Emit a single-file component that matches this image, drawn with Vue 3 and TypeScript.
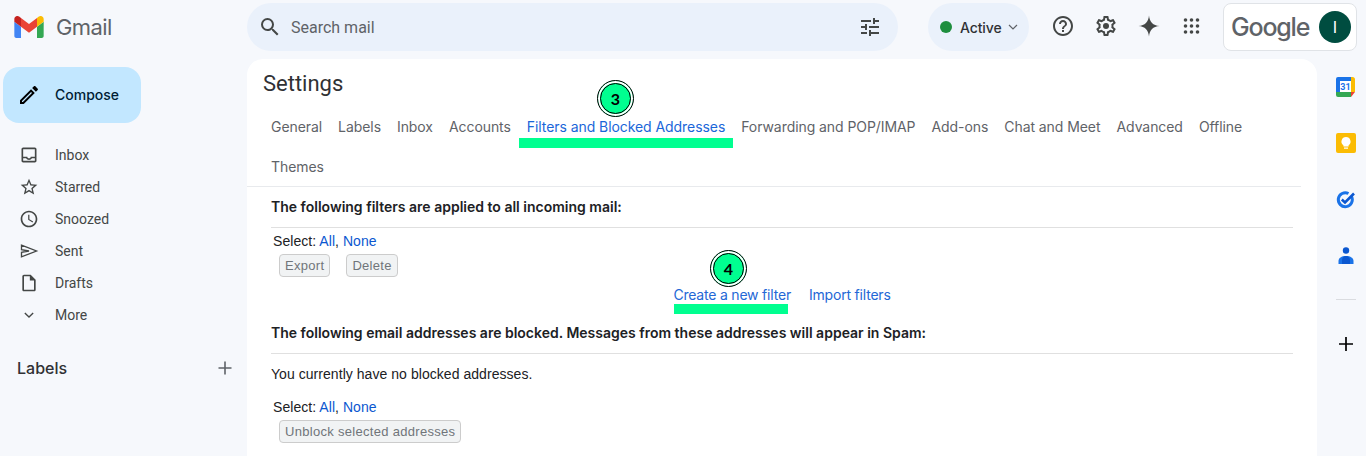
<script setup lang="ts">
interface NavItem {
  label: string;
  path: string;
  outline?: boolean;
}

const tabs: string[] = [
  'General',
  'Labels',
  'Inbox',
  'Accounts',
  'Filters and Blocked Addresses',
  'Forwarding and POP/IMAP',
  'Add-ons',
  'Chat and Meet',
  'Advanced',
  'Offline',
  'Themes',
];

const navItems: NavItem[] = [
  {
    label: 'Inbox',
    path: 'M19 3H5c-1.1 0-2 .9-2 2v14c0 1.1.9 2 2 2h14c1.1 0 2-.9 2-2V5c0-1.1-.9-2-2-2zm0 16H5v-3h3.56c.69 1.19 1.97 2 3.45 2s2.75-.81 3.45-2H19v3zm0-5h-4.99c0 1.1-.9 2-2 2s-2-.9-2-2H5V5h14v9z',
  },
  {
    label: 'Starred',
    path: 'M22 9.24l-7.19-.62L12 2 9.19 8.63 2 9.24l5.46 4.73L5.82 21 12 17.27 18.18 21l-1.63-7.03L22 9.24zM12 15.4l-3.76 2.27 1-4.28-3.32-2.88 4.38-.38L12 6.1l1.71 4.04 4.38.38-3.32 2.88 1 4.28L12 15.4z',
  },
  {
    label: 'Snoozed',
    path: 'M11.99 2C6.47 2 2 6.48 2 12s4.47 10 9.99 10C17.52 22 22 17.52 22 12S17.52 2 11.99 2zM12 20c-4.42 0-8-3.58-8-8s3.58-8 8-8 8 3.58 8 8-3.58 8-8 8zm.5-13H11v6l5.25 3.15.75-1.23-4.5-2.67z',
  },
  {
    label: 'Sent',
    path: 'M3 5l18 7-18 7v-5.500L12 12 3 10.500z',
    outline: true,
  },
  {
    label: 'Drafts',
    path: 'M14 2H6c-1.1 0-2 .9-2 2v16c0 1.1.9 2 2 2h12c1.100 0 2-.9 2-2V8l-6-6zm4 18H6V4h7v5h5v11z',
  },
  {
    label: 'More',
    path: 'M7 9.500l5 5 5-5',
    outline: true,
  },
];
</script>

<template>
  <div class="page">
    <header class="topbar">
      <div class="brand">
        <svg class="brand__logo" viewBox="52 42 88 66">
          <path fill="#4285f4" d="M58 108h14V74L52 59v43c0 3.32 2.69 6 6 6" />
          <path fill="#34a853" d="M120 108h14c3.32 0 6-2.69 6-6V59l-20 15" />
          <path fill="#fbbc04" d="M120 48v26l20-15v-8c0-7.42-8.47-11.65-14.4-7.2" />
          <path fill="#ea4335" d="M72 74V48l24 18 24-18v26L96 92" />
          <path fill="#c5221f" d="M52 51v8l20 15V48l-5.6-4.2c-5.94-4.45-14.4-.22-14.4 7.2" />
        </svg>
        <span class="brand__name">Gmail</span>
      </div>

      <div class="search">
        <svg class="search__icon" viewBox="0 0 24 24">
          <path d="M15.5 14h-.79l-.28-.27A6.471 6.471 0 0 0 16 9.5 6.5 6.5 0 1 0 9.5 16c1.61 0 3.09-.59 4.23-1.57l.27.28v.79l5 4.99L20.49 19l-4.99-5zm-6 0C7.01 14 5 11.99 5 9.5S7.01 5 9.5 5 14 7.01 14 9.5 11.99 14 9.5 14z" />
        </svg>
        <span class="search__text">Search mail</span>
        <svg class="search__tune" viewBox="0 0 24 24">
          <path d="M3 17v2h6v-2H3zM3 5v2h10V5H3zm10 16v-2h8v-2h-8v-2h-2v6h2zM7 9v2H3v2h4v2h2V9H7zm14 4v-2H11v2h10zm-6-4h2V7h4V5h-4V3h-2v6z" />
        </svg>
      </div>

      <div class="status">
        <span class="status__dot"></span>
        <span class="status__text">Active</span>
        <svg class="status__chevron" viewBox="0 0 10 6">
          <path d="M1 1l4 4 4-4" />
        </svg>
      </div>

      <div class="actions">
        <svg class="actions__icon" viewBox="0 0 24 24">
          <path d="M11 18h2v-2h-2v2zm1-16C6.48 2 2 6.48 2 12s4.48 10 10 10 10-4.48 10-10S17.52 2 12 2zm0 18c-4.41 0-8-3.59-8-8s3.59-8 8-8 8 3.59 8 8-3.59 8-8 8zm0-14c-2.21 0-4 1.79-4 4h2c0-1.1.9-2 2-2s2 .9 2 2c0 2-3 1.75-3 5h2c0-2.25 3-2.5 3-5 0-2.21-1.79-4-4-4z" />
        </svg>
        <svg class="actions__icon" viewBox="0 0 24 24">
          <path d="M19.43 12.98c.04-.32.07-.64.07-.98 0-.34-.03-.66-.07-.98l2.11-1.65c.19-.15.24-.42.12-.64l-2-3.46a.5.5 0 0 0-.61-.22l-2.49 1c-.52-.4-1.08-.73-1.69-.98l-.38-2.65A.488.488 0 0 0 14 2h-4c-.25 0-.46.18-.49.42l-.38 2.65c-.61.25-1.17.59-1.69.98l-2.49-1a.566.566 0 0 0-.18-.03c-.17 0-.34.09-.43.25l-2 3.46c-.13.22-.07.49.12.64l2.11 1.65c-.04.32-.07.65-.07.98 0 .33.03.66.07.98l-2.11 1.65c-.19.15-.24.42-.12.64l2 3.46a.5.5 0 0 0 .61.22l2.49-1c.52.4 1.08.73 1.69.98l.38 2.65c.03.24.24.42.49.42h4c.25 0 .46-.18.49-.42l.38-2.65c.61-.25 1.17-.59 1.69-.98l2.49 1c.06.02.12.03.18.03.17 0 .34-.09.43-.25l2-3.46c.12-.22.07-.49-.12-.64l-2.11-1.65zm-1.98-1.71c.04.31.05.52.05.73 0 .21-.02.43-.05.73l-.14 1.13.89.7 1.08.84-.7 1.21-1.27-.51-1.04-.42-.9.68c-.43.32-.84.56-1.25.73l-1.06.43-.16 1.13-.2 1.35h-1.4l-.19-1.35-.16-1.13-1.06-.43c-.43-.18-.83-.41-1.23-.71l-.91-.7-1.06.43-1.27.51-.7-1.21 1.08-.84.89-.7-.14-1.13c-.03-.31-.05-.54-.05-.74s.02-.43.05-.73l.14-1.13-.89-.7-1.08-.84.7-1.21 1.27.51 1.04.42.9-.68c.43-.32.84-.56 1.25-.73l1.06-.43.16-1.13.2-1.35h1.39l.19 1.35.16 1.13 1.06.43c.43.18.83.41 1.23.71l.91.7 1.06-.43 1.27-.51.7 1.21-1.07.85-.89.7.14 1.13z" />
          <circle cx="12" cy="12" r="3" />
        </svg>
        <svg class="actions__icon" viewBox="0 0 24 24">
          <path d="M12 1.5C12.6 8 16 11.4 22.5 12 16 12.6 12.6 16 12 22.5 11.4 16 8 12.6 1.5 12 8 11.4 11.4 8 12 1.5z" />
        </svg>
        <svg class="actions__icon" viewBox="0 0 24 24">
          <circle cx="5.500" cy="6" r="1.800" />
          <circle cx="11.500" cy="6" r="1.800" />
          <circle cx="17.500" cy="6" r="1.800" />
          <circle cx="5.500" cy="12" r="1.800" />
          <circle cx="11.500" cy="12" r="1.800" />
          <circle cx="17.500" cy="12" r="1.800" />
          <circle cx="5.500" cy="18" r="1.800" />
          <circle cx="11.500" cy="18" r="1.800" />
          <circle cx="17.500" cy="18" r="1.800" />
        </svg>
      </div>

      <div class="account">
        <span class="account__google">Google</span>
        <span class="account__avatar">I</span>
      </div>
    </header>

    <div class="body">
      <aside class="sidebar">
        <button class="compose">
          <svg class="compose__icon" viewBox="0 0 24 24">
            <path d="M3 17.25V21h3.75L17.81 9.94l-3.75-3.75L3 17.25zM5.92 19H5v-.92l9.06-9.06.92.92L5.92 19zM20.71 5.63l-2.34-2.34c-.2-.2-.45-.29-.71-.29s-.51.1-.7.29l-1.83 1.83 3.75 3.75 1.83-1.83c.39-.39.39-1.02 0-1.41z" />
          </svg>
          Compose
        </button>

        <nav class="nav">
          <div v-for="item in navItems" :key="item.label" class="nav__item">
            <svg class="nav__icon" :class="{ 'nav__icon--outline': item.outline }" viewBox="0 0 24 24">
              <path :d="item.path" />
            </svg>
            {{ item.label }}
          </div>
        </nav>

        <div class="labels">
          <span>Labels</span>
          <svg class="labels__plus" viewBox="0 0 14 14">
            <path d="M7 .5v13M.5 7h13" />
          </svg>
        </div>
      </aside>

      <main class="settings">
        <h1 class="settings__title">Settings</h1>

        <div class="tabs">
          <span
            v-for="tab in tabs"
            :key="tab"
            class="tabs__item"
            :class="{ 'tabs__item--active': tab === 'Filters and Blocked Addresses' }"
          >{{ tab }}</span>
        </div>

        <section class="panel">
          <h2 class="panel__heading">The following filters are applied to all incoming mail:</h2>
          <div class="select">Select: <a>All</a>, <a>None</a></div>
          <div class="buttons">
            <span class="btn">Export</span>
            <span class="btn">Delete</span>
          </div>
          <div class="filter-links">
            <a>Create a new filter</a>
            <a>Import filters</a>
          </div>

          <h2 class="panel__heading">The following email addresses are blocked. Messages from these addresses will appear in Spam:</h2>
          <p class="panel__note">You currently have no blocked addresses.</p>
          <div class="select select--second">Select: <a>All</a>, <a>None</a></div>
          <div class="buttons">
            <span class="btn">Unblock selected addresses</span>
          </div>
        </section>

        <span class="callout callout--tab">3</span>
        <span class="stripe stripe--tab"></span>
        <span class="callout callout--filter">4</span>
        <span class="stripe stripe--filter"></span>
      </main>

      <aside class="rail">
        <svg class="rail__icon rail__icon--calendar" viewBox="0 0 20 20">
          <path fill="#1a73e8" d="M2 0h13v5H5v10H0V2a2 2 0 0 1 2-2z" />
          <path fill="#fbbc04" d="M15 0h1.5A2.5 2.5 0 0 1 19 2.500V15h-4z" />
          <path fill="#34a853" d="M0 15h15v5H2a2 2 0 0 1-2-2z" />
          <path fill="#ea4335" d="M15 15h4l-4 5z" />
          <rect x="4" y="4" width="11" height="11" fill="#fff" />
          <text x="9.500" y="13.300" text-anchor="middle" class="rail__date">31</text>
        </svg>
        <svg class="rail__icon rail__icon--keep" viewBox="0 0 20 20">
          <rect width="20" height="20" rx="2" fill="#fbbc04" />
          <path fill="#fff" d="M10 4a4.500 4.500 0 0 0-2.600 8.200V13.500h5.200v-1.300A4.500 4.500 0 0 0 10 4zM8 14.500h4v1.300H8z" />
        </svg>
        <svg class="rail__icon rail__icon--tasks" viewBox="0 0 20 20">
          <path fill="none" stroke="#1a73e8" stroke-width="3" d="M15.500 6.500a7 7 0 1 1-3-3" />
          <path fill="none" stroke="#0b57d0" stroke-width="2.600" d="M5.800 9.500l3.200 3L18 3.500" />
        </svg>
        <svg class="rail__icon rail__icon--people" viewBox="0 0 16 17">
          <circle cx="8" cy="3.500" r="3.200" fill="#0b57d0" />
          <path fill="#1a73e8" d="M0.500 17v-3c0-3 3-5 7.500-5s7.500 2 7.500 5v3z" />
          <path fill="#0b57d0" d="M4 17v-4c0-2 2-4 4-4s4 2 4 4v4z" />
        </svg>
        <span class="rail__divider"></span>
        <svg class="rail__plus" viewBox="0 0 14 14">
          <path d="M7 0v14M0 7h14" />
        </svg>
      </aside>
    </div>
  </div>
</template>

<style>
html,
body {
  margin: 0;
  background: #f6f8fc;
}
</style>

<style scoped>
.page {
  width: 1366px;
  height: 456px;
  overflow: hidden;
  background: #f6f8fc;
  font-family: Roboto, "Liberation Sans", sans-serif;
  font-size: 14px;
  color: #202124;
}
.topbar {
  display: flex;
  align-items: flex-start;
  box-sizing: border-box;
  height: 59px;
  padding-top: 3px;
}
.brand {
  display: flex;
  align-items: center;
  flex: none;
  box-sizing: border-box;
  width: 247px;
  height: 48px;
  padding-left: 14px;
}
.brand__logo {
  width: 30px;
  height: 22px;
}
.brand__name {
  margin-left: 12px;
  font-family: Inter, sans-serif;
  font-size: 22px;
  letter-spacing: -0.6px;
  color: #5f6368;
}
.search {
  display: flex;
  align-items: center;
  flex: none;
  box-sizing: border-box;
  width: 651px;
  height: 48px;
  padding: 0 16px 0 11px;
  background: #eaf1fb;
  border-radius: 24px;
}
.search__icon,
.search__tune {
  width: 24px;
  height: 24px;
  fill: #444746;
}
.search__text {
  flex: 1;
  margin-left: 9px;
  font-size: 16px;
  color: #5f6368;
}
.status {
  display: flex;
  align-items: center;
  flex: none;
  box-sizing: border-box;
  width: 101px;
  height: 48px;
  margin-left: 30px;
  padding-left: 12px;
  background: #eaf1fb;
  border-radius: 24px;
  font-family: Inter, sans-serif;
  font-weight: 500;
  letter-spacing: -0.1px;
  color: #303134;
}
.status__dot {
  width: 12px;
  height: 12px;
  background: #1e8e3e;
  border-radius: 50%;
}
.status__text {
  margin-left: 8px;
}
.status__chevron {
  width: 10px;
  height: 6px;
  margin-left: 6px;
  fill: none;
  stroke: #5f6368;
  stroke-width: 1.2;
}
.actions {
  display: flex;
  align-items: center;
  flex: none;
  gap: 19px;
  height: 46px;
  margin-left: 22px;
}
.actions__icon {
  width: 24px;
  height: 24px;
  fill: #444746;
}
.account {
  display: flex;
  align-items: center;
  justify-content: space-between;
  flex: none;
  box-sizing: border-box;
  width: 134px;
  height: 48px;
  margin-left: 19px;
  padding: 0 5px 0 7px;
  background: #fff;
  border: 1px solid #e0e3e7;
  border-radius: 8px;
}
.account__google {
  font-family: Inter, sans-serif;
  font-size: 25px;
  font-weight: 500;
  letter-spacing: -1.2px;
  color: #5f6368;
}
.account__avatar {
  display: flex;
  align-items: center;
  justify-content: center;
  width: 32px;
  height: 32px;
  background: #004d40;
  border-radius: 50%;
  font-size: 16px;
  color: #fff;
}
.body {
  display: flex;
  height: 397px;
}
.sidebar {
  flex: none;
  width: 247px;
}
.compose {
  display: flex;
  align-items: center;
  gap: 16px;
  box-sizing: border-box;
  width: 138px;
  height: 56px;
  margin: 8px 0 16px 3px;
  padding: 0 0 2px 14px;
  background: #c2e7ff;
  border: none;
  border-radius: 16px;
  font-family: Inter, sans-serif;
  font-size: 14px;
  font-weight: 500;
  color: #001d35;
}
.compose__icon {
  width: 24px;
  height: 24px;
  margin: 2px -2px 0 0;
  fill: #000;
}
.nav__item {
  display: flex;
  align-items: center;
  gap: 16px;
  height: 32px;
  padding-left: 19px;
  color: #444746;
}
.nav__icon {
  width: 20px;
  height: 20px;
  fill: #444746;
}
.nav__icon--outline {
  fill: none;
  stroke: #444746;
  stroke-width: 1.6;
}
.labels {
  display: flex;
  align-items: center;
  justify-content: space-between;
  height: 32px;
  margin-top: 21px;
  padding: 0 15px 0 17px;
  font-family: Inter, sans-serif;
  font-size: 16px;
  font-weight: 500;
  color: #303134;
}
.labels__plus {
  width: 14px;
  height: 14px;
  fill: none;
  stroke: #5f6368;
  stroke-width: 1.6;
}
.settings {
  position: relative;
  flex: none;
  width: 1070px;
  background: #fff;
  border-radius: 16px 16px 0 0;
}
.settings__title {
  margin: 0;
  padding: 1px 0 0 16px;
  height: 47px;
  font-size: 22px;
  font-weight: 400;
  line-height: 47px;
  color: #303134;
}
.tabs {
  display: flex;
  flex-wrap: wrap;
  align-content: flex-start;
  box-sizing: border-box;
  width: 1054px;
  height: 80px;
  padding-left: 16px;
  border-bottom: 1px solid #e8eaed;
  font-family: Inter, sans-serif;
  letter-spacing: -0.07px;
}
.tabs__item {
  height: 40px;
  padding: 0 8px;
  line-height: 40px;
  color: #5f6368;
}
.tabs__item--active {
  color: #1a66d9;
}
.panel {
  box-sizing: border-box;
  width: 1054px;
  padding: 0 8px 0 24px;
  font-family: "Liberation Sans", sans-serif;
  letter-spacing: 0.05px;
}
.panel__heading {
  box-sizing: border-box;
  height: 41px;
  margin: 0;
  padding-top: 12px;
  border-bottom: 1px solid #e0e0e0;
  font-family: Inter, sans-serif;
  font-size: 14px;
  font-weight: 600;
  line-height: 16px;
  letter-spacing: 0;
  color: #202124;
}
.panel__note {
  margin: 10px 0 0;
  line-height: 20px;
  color: #202124;
}
.select {
  margin-top: 3px;
  padding-left: 2px;
  line-height: 20px;
}
.select--second {
  margin-top: 13px;
}
.select a {
  color: #0b57d0;
}
.buttons {
  display: flex;
  gap: 16px;
  margin-top: 3px;
  padding-left: 8px;
}
.btn {
  box-sizing: border-box;
  height: 23px;
  padding: 0 5px;
  background: #f1f3f4;
  border: 1px solid #ccc;
  border-radius: 4px;
  font-size: 13px;
  line-height: 21px;
  letter-spacing: 0.3px;
  color: #70757a;
}
.filter-links {
  display: flex;
  justify-content: center;
  gap: 18px;
  margin-top: 8px;
  margin-bottom: 8px;
  font-family: Inter, sans-serif;
  line-height: 20px;
  letter-spacing: -0.2px;
}
.filter-links a {
  color: #2467d6;
}
.callout {
  position: absolute;
  box-sizing: border-box;
  width: 37px;
  height: 37px;
  background: #00ff90;
  border: 1px solid #000;
  border-radius: 50%;
  outline: 1px solid #000;
  outline-offset: -4px;
  box-shadow: inset 0 0 0 2px #fff;
  font-family: Lato, sans-serif;
  font-size: 16px;
  font-weight: 700;
  line-height: 35px;
  text-align: center;
  color: #000;
}
.callout--tab {
  left: 350px;
  top: 21px;
}
.callout--filter {
  left: 463px;
  top: 191px;
}
.stripe {
  position: absolute;
  height: 10px;
  background: #00ff90;
}
.stripe--tab {
  left: 272px;
  top: 79px;
  width: 214px;
}
.stripe--filter {
  left: 427px;
  top: 245px;
  width: 114px;
}
.rail {
  display: flex;
  flex-direction: column;
  align-items: center;
  flex: 1;
  padding-left: 8px;
}
.rail__icon {
  width: 20px;
  height: 20px;
}
.rail__icon--calendar {
  margin-top: 18px;
}
.rail__icon--keep {
  margin-top: 36px;
}
.rail__icon--tasks {
  margin-top: 37px;
}
.rail__icon--people {
  width: 16px;
  height: 17px;
  margin-top: 37px;
}
.rail__date {
  font-family: Roboto, sans-serif;
  font-size: 9px;
  font-weight: 700;
  fill: #1a73e8;
}
.rail__divider {
  width: 20px;
  height: 1px;
  margin-top: 35px;
  background: #dadce0;
}
.rail__plus {
  width: 14px;
  height: 14px;
  margin-top: 37px;
  fill: none;
  stroke: #000;
  stroke-width: 1.7;
}
</style>
